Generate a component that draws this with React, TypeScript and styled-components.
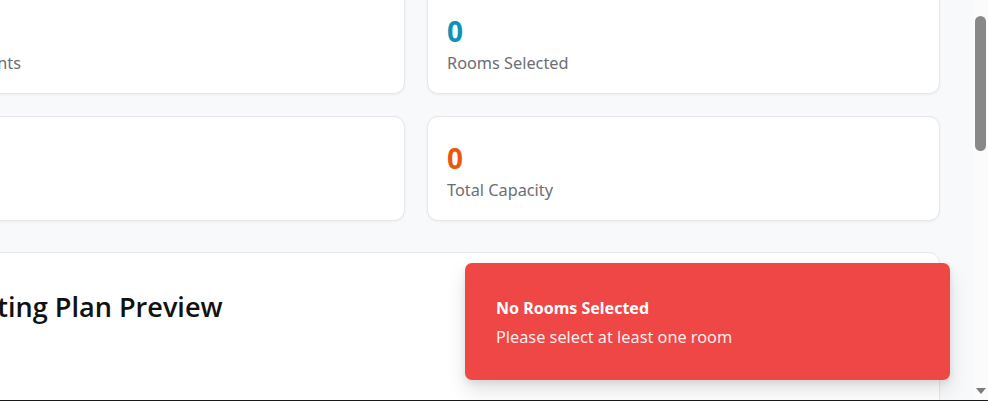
import React from "react";
import styled, { createGlobalStyle } from "styled-components";

const Global = createGlobalStyle`
  html, body { margin: 0; padding: 0; overflow: hidden; }
  body { font-family: "Noto Sans", "Open Sans", sans-serif; background: #f8f9fa; }
`;

const Frame = styled.div`
  display: flex;
  height: 400px;
  border-bottom: 1px solid #1a1a1a;
  overflow: hidden;
`;

const Page = styled.main`
  position: relative;
  flex: 1;
  min-width: 0;
  background: #f8f9fa;
  overflow: hidden;
`;

const Content = styled.div`
  display: flex;
  flex-direction: column;
  gap: 31px;
  width: 1048px;
  margin: -11px 0 0 -108px;
`;

const StatsGrid = styled.section`
  display: grid;
  grid-template-columns: 513px 513px;
  gap: 22px 22px;
`;

const StatCard = styled.div`
  box-sizing: border-box;
  height: 105px;
  padding: 23px 19px;
  background: #ffffff;
  border: 1px solid #e6e7ea;
  border-radius: 11px;
  box-shadow: 0 1px 3px rgba(0, 0, 0, 0.05);
  display: flex;
  flex-direction: column;
`;

const StatValue = styled.div<{ $color: string }>`
  font-size: 28px;
  line-height: 36px;
  font-weight: 700;
  color: ${(p) => p.$color};
`;

const StatLabel = styled.div`
  margin-top: 2px;
  font-size: 16.3px;
  line-height: 24px;
  color: #6b6e73;
  white-space: nowrap;
`;

const Panel = styled.section`
  box-sizing: border-box;
  height: 300px;
  padding: 27px 30px 27px 58px;
  background: #ffffff;
  border: 1px solid #e6e7ea;
  border-radius: 11px;
`;

const PanelTitle = styled.h2`
  margin: 8px 0 0;
  font-family: "Open Sans", "Noto Sans", sans-serif;
  font-size: 27.1px;
  line-height: 38px;
  font-weight: 600;
  color: #111111;
  white-space: nowrap;
`;

const Toast = styled.div`
  position: absolute;
  top: 263px;
  right: 23px;
  width: 485px;
  height: 117px;
  box-sizing: border-box;
  padding: 32px 31px;
  background: #ef4646;
  border-radius: 7px;
  box-shadow: 0 10px 20px rgba(0, 0, 0, 0.12), 0 3px 6px rgba(0, 0, 0, 0.08);
  color: #ffffff;
  display: flex;
  flex-direction: column;
  gap: 4px;
`;

const ToastTitle = styled.div`
  font-size: 16px;
  line-height: 26px;
  font-weight: 700;
`;

const ToastText = styled.div`
  font-size: 16.3px;
  line-height: 24px;
  opacity: 0.9;
`;

const ScrollBar = styled.div`
  width: 15px;
  background: #fbfbfb;
  display: flex;
  flex-direction: column;
  align-items: center;
`;

const Thumb = styled.div`
  margin-top: 16px;
  width: 11px;
  height: 135px;
  border-radius: 6px;
  background: #888888;
`;

const Track = styled.div`
  flex: 1;
`;

const ArrowDown = () => (
  <svg width="12" height="8" viewBox="0 0 12 8" style={{ marginBottom: 5 }}>
    <path d="M1 1 H11 L6 7 Z" fill="#7b7b7b" />
  </svg>
);

const stats = [
  { value: "0", label: "Total Students", color: "#2563eb" },
  { value: "0", label: "Rooms Selected", color: "#0e93b6" },
  { value: "0", label: "Exams", color: "#16a34a" },
  { value: "0", label: "Total Capacity", color: "#ea580c" },
];

export default function App() {
  return (
    <>
      <Global />
      <Frame>
        <Page>
          <Content>
            <StatsGrid>
              {stats.map((s) => (
                <StatCard key={s.label}>
                  <StatValue $color={s.color}>{s.value}</StatValue>
                  <StatLabel>{s.label}</StatLabel>
                </StatCard>
              ))}
            </StatsGrid>
            <Panel>
              <PanelTitle>Seating Plan Preview</PanelTitle>
            </Panel>
          </Content>
          <Toast role="alert">
            <ToastTitle>No Rooms Selected</ToastTitle>
            <ToastText>Please select at least one room</ToastText>
          </Toast>
        </Page>
        <ScrollBar>
          <Thumb />
          <Track />
          <ArrowDown />
        </ScrollBar>
      </Frame>
    </>
  );
}
